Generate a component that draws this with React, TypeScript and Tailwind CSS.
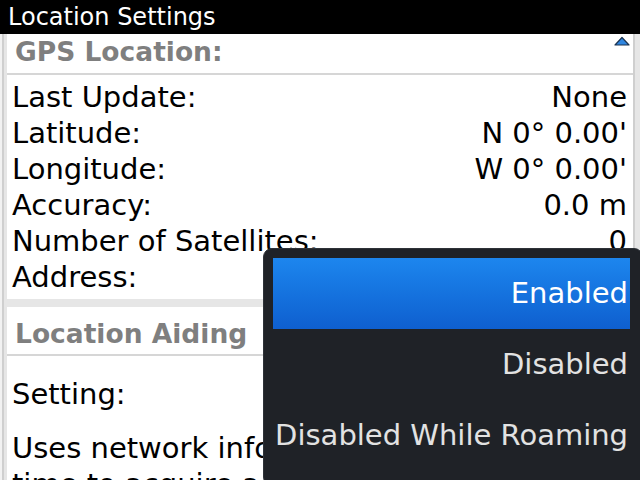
const gpsRows = [
  { label: 'Last Update:', value: 'None' },
  { label: 'Latitude:', value: "N 0° 0.00'" },
  { label: 'Longitude:', value: "W 0° 0.00'" },
  { label: 'Accuracy:', value: '0.0 m' },
  { label: 'Number of Satellites:', value: '0' },
  { label: 'Address:', value: '' },
];

const options = ['Enabled', 'Disabled', 'Disabled While Roaming'];

export default function App() {
  return (
    <div
      className="relative w-[640px] h-[480px] overflow-hidden bg-[#e6e6e6]"
      style={{ fontFamily: '"DejaVu Sans", sans-serif' }}
    >
      <div className="h-[34px] bg-black text-white text-[24px] leading-[34px] pl-[8px]">
        Location Settings
      </div>

      <div className="flex h-[446px]">
        <div className="w-[7px] flex shrink-0">
          <div className="w-[2px] bg-[#f2f2f2]" />
          <div className="w-[2px] bg-[#cfcfcf]" />
          <div className="flex-1 bg-[#e6e6e6]" />
        </div>

        <div className="flex-1 flex flex-col gap-[8px] overflow-hidden">
          <div className="bg-white">
            <div className="relative h-[39px] pl-[8px] text-[26.5px] font-bold text-[#7f7f7f] leading-[36px]">
              GPS Location:
              <svg className="absolute right-[3px] top-[2px]" width="16" height="10" viewBox="0 0 16 10">
                <path d="M1 9 L8 1.5 L15 9 Z" fill="#2f86e0" stroke="#1b3350" strokeWidth="1.2" strokeLinejoin="round" />
              </svg>
            </div>
            <div className="h-[2px] bg-[#d6d6d6]" />
            <div className="pt-[4px] pb-[4px] pl-[5px] pr-[6px] text-[29px] leading-[36px] text-black">
              {gpsRows.map((row) => (
                <div key={row.label} className="flex justify-between h-[36px] whitespace-nowrap">
                  <span>{row.label}</span>
                  <span>{row.value}</span>
                </div>
              ))}
            </div>
          </div>

          <div className="bg-white flex-1">
            <div className="h-[47px] pl-[8px] text-[26.5px] font-bold text-[#7f7f7f] leading-[54px]">
              Location Aiding
            </div>
            <div className="h-[2px] bg-[#d6d6d6]" />
            <div className="pl-[5px] text-[29px] leading-[36px] text-black whitespace-nowrap">
              <div className="h-[36px] mt-[20px]">Setting:</div>
              <div className="mt-[18px]">
                Uses network information to help reduce the
                <br />
                time to acquire a GPS location.
              </div>
            </div>
          </div>
        </div>

        <div className="w-[7px] flex shrink-0">
          <div className="w-[2px] bg-[#cfcfcf]" />
          <div className="flex-1 bg-[#e6e6e6]" />
        </div>
      </div>

      <div className="absolute left-[263px] top-[248px] w-[380px] h-[238px] rounded-[9px] bg-[#1f2227] border border-[#2e3238] p-[9px]">
        <div className="flex flex-col w-[357px]">
          {options.map((opt, i) => (
            <div
              key={opt}
              className={
                i === 0
                  ? 'h-[71px] flex items-center justify-end pr-[2px] text-[29px] whitespace-nowrap text-white bg-gradient-to-b from-[#1d86ee] to-[#0f5fcf]'
                  : 'h-[71px] flex items-center justify-end pr-[2px] text-[29px] whitespace-nowrap text-[#e2e2e2]'
              }
            >
              {opt}
            </div>
          ))}
        </div>
      </div>
    </div>
  );
}
